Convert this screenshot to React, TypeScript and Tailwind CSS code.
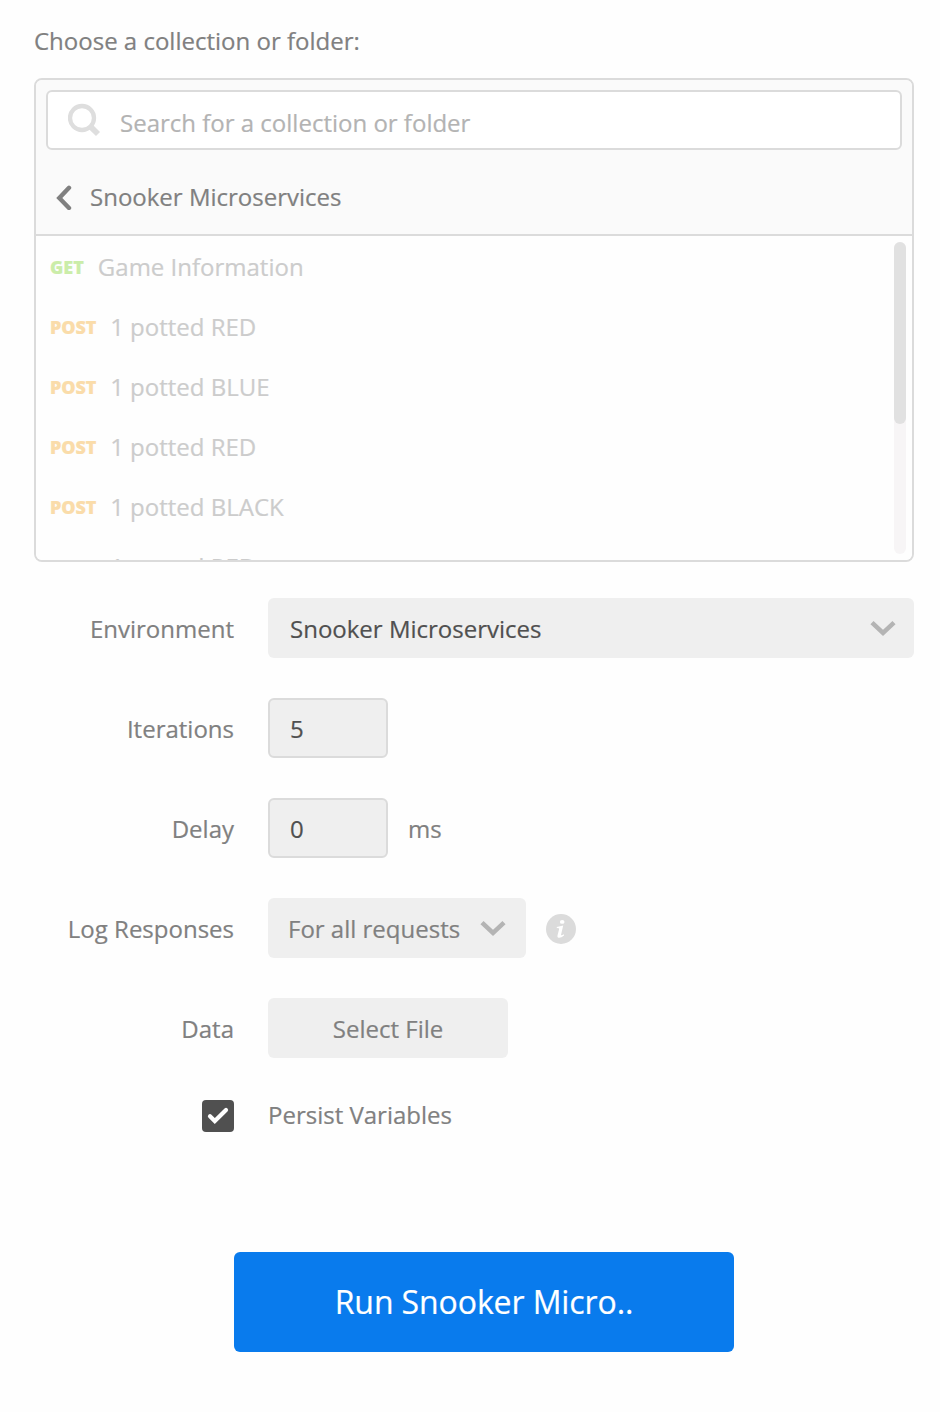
import type { ReactNode } from 'react';

const requests = [
  { method: 'GET', name: 'Game Information' },
  { method: 'POST', name: '1 potted RED' },
  { method: 'POST', name: '1 potted BLUE' },
  { method: 'POST', name: '1 potted RED' },
  { method: 'POST', name: '1 potted BLACK' },
  { method: 'POST', name: '1 potted RED' },
];

function Field({ label, children }: { label: string; children: ReactNode }) {
  return (
    <div className="flex h-[60px] items-center">
      <div className="mr-[34px] w-[200px] pt-[2px] text-right">{label}</div>
      {children}
    </div>
  );
}

function ChevronDown() {
  return (
    <svg width="26" height="18" viewBox="0 0 26 18" fill="none" stroke="#b4b4b4" strokeWidth="4.500">
      <path d="M2 3.600 L13 14 L24 3.600" />
    </svg>
  );
}

export default function App() {
  return (
    <div className="flex h-[1412px] w-[940px] flex-col bg-[#fefefe] pt-[24px] pl-[34px] font-['Open_Sans',sans-serif] text-[24px] leading-[34px] text-[#808080] [-webkit-text-stroke:0.2px]">
      <div className="h-[54px]">Choose a collection or folder:</div>

      <div className="flex h-[484px] w-[880px] flex-col overflow-hidden rounded-[8px] border-2 border-[#dbdbdb]">
        <div className="h-[156px] shrink-0 border-b-2 border-[#dbdbdb] bg-[#fafafa] px-[10px] pt-[10px]">
          <div className="flex h-[60px] items-center rounded-[6px] border-2 border-[#dbdbdb] bg-white pl-[20px]">
            <svg width="34" height="34" viewBox="0 0 34 34" fill="none" stroke="#dedede">
              <circle cx="14" cy="15" r="12" strokeWidth="4.300" />
              <path d="M22 23.200 L30 31" strokeWidth="5.800" />
            </svg>
            <span className="ml-[18px] pt-[6px] text-[#b3b3b3]">Search for a collection or folder</span>
          </div>
          <div className="flex h-[84px] items-center pt-[10px] pl-[10px]">
            <svg width="18" height="26" viewBox="0 0 18 26" fill="none" stroke="#808080" strokeWidth="4.400" strokeLinecap="round">
              <path d="M13 3.800 L3.300 14 L13 24" strokeLinejoin="miter" />
            </svg>
            <span className="ml-[16px]">Snooker Microservices</span>
          </div>
        </div>
        <div className="flex min-h-0 flex-1 bg-[#fefefe]">
          <div className="flex-1 overflow-hidden pl-[14px]">
            {requests.map((request, index) => (
              <div key={index} className="flex h-[60px] items-center pt-[2px]">
                <span
                  className={
                    request.method === 'GET'
                      ? 'text-[18px] font-extrabold text-[#cbeda9]'
                      : 'text-[18px] font-extrabold tracking-[-0.15px] text-[#fadcaa]'
                  }
                >
                  {request.method}
                </span>
                <span className="ml-[14px] text-[#cccccc]">{request.name}</span>
              </div>
            ))}
          </div>
          <div className="mt-[6px] mr-[6px] h-[312px] w-[12px] rounded-full bg-[#f7f5f6]">
            <div className="h-[182px] rounded-full bg-[#e1e1e1]" />
          </div>
        </div>
      </div>

      <div className="mt-[36px] flex flex-col gap-[40px]">
        <Field label="Environment">
          <div className="flex h-[60px] w-[646px] items-center justify-between rounded-[6px] bg-[#efefef] pr-[18px] pl-[22px]">
            <span className="pt-[2px] text-[#505050]">Snooker Microservices</span>
            <ChevronDown />
          </div>
        </Field>
        <Field label="Iterations">
          <div className="flex h-[60px] w-[120px] items-center rounded-[6px] border-2 border-[#dbdbdb] bg-[#efefef] pt-[2px] pl-[20px] text-[#505050]">
            5
          </div>
        </Field>
        <Field label="Delay">
          <div className="flex h-[60px] w-[120px] items-center rounded-[6px] border-2 border-[#dbdbdb] bg-[#efefef] pt-[2px] pl-[20px] text-[#505050]">
            0
          </div>
          <span className="ml-[20px] pt-[2px]">ms</span>
        </Field>
        <Field label="Log Responses">
          <div className="flex h-[60px] w-[258px] items-center justify-between rounded-[6px] bg-[#efefef] pr-[20px] pl-[20px]">
            <span className="pt-[2px]">For all requests</span>
            <ChevronDown />
          </div>
          <svg className="mt-[2px] ml-[20px]" width="30" height="30" viewBox="0 0 30 30">
            <circle cx="15" cy="15" r="15" fill="#dbdbdb" />
            <ellipse cx="16.200" cy="7.900" rx="2.300" ry="1.900" fill="#fff" />
            <path d="M10.800 13 L17.200 11.600 L15 21 Q15.200 22 18 20.200 L18 21.400 Q15 24.300 12.400 23.800 Q11 23.400 11.500 21.500 L13.200 14.700 Q12.700 13.800 10.800 14.200 Z" fill="#fff" />
          </svg>
        </Field>
        <Field label="Data">
          <div className="flex h-[60px] w-[240px] items-center justify-center rounded-[6px] bg-[#efefef] pt-[2px]">
            Select File
          </div>
        </Field>
      </div>

      <div className="mt-[42px] flex h-[32px] items-center pl-[168px]">
        <div className="flex size-[32px] items-center justify-center rounded-[4px] bg-[#505050]">
          <svg width="32" height="32" viewBox="0 0 32 32" fill="none" stroke="#fff" strokeWidth="4.200" strokeLinecap="round" strokeLinejoin="miter">
            <path d="M8 16.200 L12.800 21 L24 10" />
          </svg>
        </div>
        <span className="ml-[34px] pb-[2px]">Persist Variables</span>
      </div>

      <button className="mt-[120px] ml-[200px] h-[100px] w-[500px] rounded-[6px] bg-[#097bed] text-[32px] tracking-[-0.1px] text-white">
        Run Snooker Micro..
      </button>
    </div>
  );
}
